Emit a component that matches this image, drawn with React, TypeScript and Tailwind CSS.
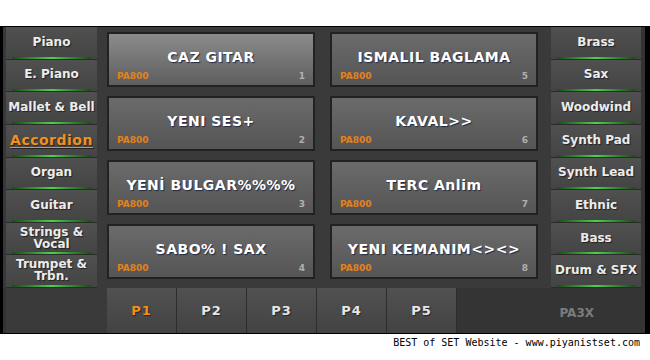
import React from "react";

const leftItems = [
  "Piano",
  "E. Piano",
  "Mallet & Bell",
  "Accordion",
  "Organ",
  "Guitar",
  "Strings &\nVocal",
  "Trumpet &\nTrbn.",
];
const rightItems = [
  "Brass",
  "Sax",
  "Woodwind",
  "Synth Pad",
  "Synth Lead",
  "Ethnic",
  "Bass",
  "Drum & SFX",
];

const cards = [
  { name: "CAZ GITAR", n: 1, sel: true },
  { name: "ISMALIL BAGLAMA", n: 5 },
  { name: "YENI SES+", n: 2 },
  { name: "KAVAL>>", n: 6 },
  { name: "YENİ BULGAR%%%%", n: 3 },
  { name: "TERC Anlim", n: 7 },
  { name: "SABO% ! SAX", n: 4 },
  { name: "YENI KEMANIM<><>", n: 8 },
];

function SideBtn({ label, active }: { label: string; active?: boolean }) {
  return (
    <div className="flex-1 flex flex-col bg-linear-to-b from-[#505050] to-[#444444] border-b border-[#2b2b2b]">
      <div className="flex-1 flex items-center justify-center text-center whitespace-pre-line leading-[12px]">
        {active ? (
          <span className="text-[14px] font-extrabold tracking-[0.5px] text-[#f2901f] underline underline-offset-2 decoration-1 [text-shadow:1px_1px_1px_rgba(0,0,0,0.5)]">
            {label}
          </span>
        ) : (
          <span className="text-[12px] font-bold text-[#ececec] [text-shadow:1px_1px_1px_rgba(0,0,0,0.55)]">
            {label}
          </span>
        )}
      </div>
      <div className="h-[2px] mx-[6px] bg-linear-to-r from-[#1d4a1d] via-[#4bd24b] to-[#1d4a1d]" />
    </div>
  );
}

function Card({ name, n, sel }: { name: string; n: number; sel?: boolean }) {
  return (
    <div
      className={
        "flex flex-col border-2 border-[#222222] px-[8px] pt-[9px] pb-[4px] " +
        (sel
          ? "bg-linear-to-b from-[#8c8c8c] to-[#5e5e5e]"
          : "bg-linear-to-b from-[#6b6b6b] to-[#555555]")
      }
    >
      <div className="flex-1 flex items-center justify-center text-[14px] font-bold tracking-[0.5px] text-white [text-shadow:1px_1px_1px_rgba(20,30,60,0.8)]">
        {name}
      </div>
      <div className="flex items-end justify-between leading-[9px]">
        <span className="text-[9px] font-bold text-[#e4821a]">PA800</span>
        <span className="text-[9px] font-bold text-[#b0b0b0]">{n}</span>
      </div>
    </div>
  );
}

export default function App() {
  return (
    <div className="w-[650px] h-[360px] bg-white flex flex-col font-['DejaVu_Sans',sans-serif]">
      <div className="h-[26px]" />
      <div className="h-[308px] flex flex-col bg-[#383838] border-t border-b border-black border-l-[3px] border-r-[5px]">
        <div className="h-[261px] flex">
          <div className="w-[94px] pl-[3px] flex flex-col">
            {leftItems.map((l) => (
              <SideBtn key={l} label={l} active={l === "Accordion"} />
            ))}
          </div>
          <div className="flex-1 grid grid-cols-2 grid-rows-4 gap-x-[15px] gap-y-[9px] pt-[5px] pb-[9px] pl-[10px] pr-[13px] bg-[#3a3a3a]">
            {cards.map((c) => (
              <Card key={c.n} name={c.name} n={c.n} sel={c.sel} />
            ))}
          </div>
          <div className="w-[94px] pr-[4px] flex flex-col bg-[#333333]">
            {rightItems.map((l) => (
              <SideBtn key={l} label={l} />
            ))}
          </div>
        </div>
        <div className="flex-1 flex bg-[#343434]">
          <div className="w-[104px] pl-[3px] flex">
            <div className="flex-1 bg-[#3a3a3a]" />
          </div>
          {["P1", "P2", "P3", "P4", "P5"].map((p, i) => (
            <div
              key={p}
              className="w-[70px] flex items-center justify-center bg-linear-to-b from-[#515151] to-[#434343] border-r border-[#2d2d2d]"
            >
              <span
                className={
                  "text-[13px] font-bold tracking-[1px] [text-shadow:1px_1px_1px_rgba(0,0,0,0.5)] " +
                  (i === 0 ? "text-[#f0901f]" : "text-[#e6e6e6]")
                }
              >
                {p}
              </span>
            </div>
          ))}
          <div className="flex-1 flex items-center justify-end pr-[51px] pt-[4px]">
            <span className="text-[12px] font-bold text-[#7c7c7c]">PA3X</span>
          </div>
        </div>
      </div>
      <div className="flex-1 flex justify-end pr-[10px] pt-[3px]">
        <span className="font-['DejaVu_Sans_Mono',monospace] text-[10px] leading-[12px] text-black">
          BEST of SET Website - www.piyanistset.com
        </span>
      </div>
    </div>
  );
}
